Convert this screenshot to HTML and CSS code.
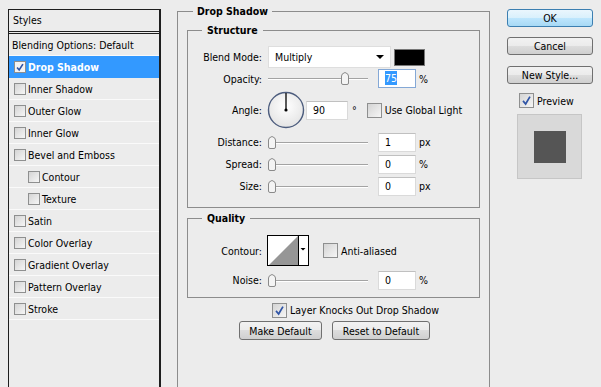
FILE: index.html
```html
<!DOCTYPE html>
<html>
<head>
  <title>Layer Style</title>
  <link rel="stylesheet" href="styles.css">
</head>
<body>

<div class="dialog">

  <div class="styles-panel">
    <div class="styles-head">Styles</div>
    <ul class="styles-list">
      <li class="plain">Blending Options: Default</li>
      <li class="selected"><span class="cb small"><svg viewBox="0 0 12 12"><path d="M2.5 6.5 L5 9.5 L9.5 2.5" /></svg></span>Drop Shadow</li>
      <li><span class="cb small"></span>Inner Shadow</li>
      <li><span class="cb small"></span>Outer Glow</li>
      <li><span class="cb small"></span>Inner Glow</li>
      <li><span class="cb small"></span>Bevel and Emboss</li>
      <li class="sub"><span class="cb small"></span>Contour</li>
      <li class="sub"><span class="cb small"></span>Texture</li>
      <li><span class="cb small"></span>Satin</li>
      <li><span class="cb small"></span>Color Overlay</li>
      <li><span class="cb small"></span>Gradient Overlay</li>
      <li><span class="cb small"></span>Pattern Overlay</li>
      <li><span class="cb small"></span>Stroke</li>
    </ul>
  </div>

  <fieldset class="main">
    <legend>Drop Shadow</legend>

    <fieldset class="group structure">
      <legend>Structure</legend>

      <div class="row blend-row">
        <span class="lbl">Blend Mode:</span>
        <div class="select">Multiply<span class="arrow"></span></div>
        <span class="swatch"></span>
      </div>

      <div class="row opacity-row">
        <span class="lbl">Opacity:</span>
        <div class="slider"><svg class="thumb" style="margin-left: 73px" viewBox="0 0 8 13"><path d="M0.5 11 V4 Q0.5 1.5 4 0.5 Q7.5 1.5 7.5 4 V11 Q7.5 12.5 6 12.5 H2 Q0.5 12.5 0.5 11 Z" /></svg></div>
        <div class="field focus"><span class="sel">75</span></div>
        <span class="unit">%</span>
      </div>

      <div class="row angle-row">
        <span class="lbl">Angle:</span>
        <svg class="dial" viewBox="0 0 38 38">
          <defs>
            <radialGradient id="dialFill" cx="50%" cy="40%" r="60%">
              <stop offset="0" stop-color="#ffffff"/>
              <stop offset="1" stop-color="#e4e4e4"/>
            </radialGradient>
          </defs>
          <circle cx="19" cy="19" r="17.5" fill="url(#dialFill)" stroke="#4d5d7e" stroke-width="1.4"/>
          <line x1="19" y1="19" x2="19" y2="2" stroke="#000" stroke-width="1.3"/>
          <circle cx="19" cy="19" r="1.6" fill="#000"/>
        </svg>
        <div class="field angle-field">90</div>
        <span class="deg">°</span>
        <span class="cb global"></span>
        <span class="cb-text">Use Global Light</span>
      </div>

      <div class="row">
        <span class="lbl">Distance:</span>
        <div class="slider"><svg class="thumb" style="margin-left: 0px" viewBox="0 0 8 13"><path d="M0.5 11 V4 Q0.5 1.5 4 0.5 Q7.5 1.5 7.5 4 V11 Q7.5 12.5 6 12.5 H2 Q0.5 12.5 0.5 11 Z" /></svg></div>
        <div class="field">1</div>
        <span class="unit">px</span>
      </div>

      <div class="row">
        <span class="lbl">Spread:</span>
        <div class="slider"><svg class="thumb" style="margin-left: 0px" viewBox="0 0 8 13"><path d="M0.5 11 V4 Q0.5 1.5 4 0.5 Q7.5 1.5 7.5 4 V11 Q7.5 12.5 6 12.5 H2 Q0.5 12.5 0.5 11 Z" /></svg></div>
        <div class="field">0</div>
        <span class="unit">%</span>
      </div>

      <div class="row">
        <span class="lbl">Size:</span>
        <div class="slider"><svg class="thumb" style="margin-left: 0px" viewBox="0 0 8 13"><path d="M0.5 11 V4 Q0.5 1.5 4 0.5 Q7.5 1.5 7.5 4 V11 Q7.5 12.5 6 12.5 H2 Q0.5 12.5 0.5 11 Z" /></svg></div>
        <div class="field">0</div>
        <span class="unit">px</span>
      </div>
    </fieldset>

    <fieldset class="group quality">
      <legend>Quality</legend>

      <div class="row contour-row">
        <span class="lbl">Contour:</span>
        <svg class="contour" viewBox="0 0 42 31">
          <rect x="0.5" y="0.5" width="41" height="30" fill="#fff" stroke="#000"/>
          <polygon points="2,30 31,1 31,30" fill="#969696"/>
          <line x1="31.5" y1="0" x2="31.5" y2="31" stroke="#000"/>
          <polygon points="33.5,13 38.5,13 36,15.5" fill="#000"/>
        </svg>
        <span class="cb anti"></span>
        <span class="cb-text">Anti-aliased</span>
      </div>

      <div class="row noise-row">
        <span class="lbl">Noise:</span>
        <div class="slider"><svg class="thumb" style="margin-left: 0px" viewBox="0 0 8 13"><path d="M0.5 11 V4 Q0.5 1.5 4 0.5 Q7.5 1.5 7.5 4 V11 Q7.5 12.5 6 12.5 H2 Q0.5 12.5 0.5 11 Z" /></svg></div>
        <div class="field">0</div>
        <span class="unit">%</span>
      </div>
    </fieldset>

    <div class="knock">
      <span class="cb"><svg viewBox="0 0 15 15"><path d="M3.5 8 L6.5 11.5 L11.5 3" /></svg></span>
      <span class="cb-text">Layer Knocks Out Drop Shadow</span>
    </div>

    <div class="defaults">
      <button class="btn make">Make Default</button>
      <button class="btn reset">Reset to Default</button>
    </div>
  </fieldset>

  <div class="side">
    <button class="btn ok">OK</button>
    <button class="btn cancel">Cancel</button>
    <button class="btn new-style">New Style...</button>
    <div class="preview-row">
      <span class="cb"><svg viewBox="0 0 15 15"><path d="M3.5 8 L6.5 11.5 L11.5 3" /></svg></span>
      <span class="cb-text">Preview</span>
    </div>
    <div class="preview">
      <div class="preview-square"></div>
    </div>
  </div>

</div>

</body>
</html>
```

FILE: styles.css
```css
body {
  margin: 0;
  background-color: #ececec;
  color: #000;
  font-family: "DejaVu Sans Condensed", "Liberation Sans", sans-serif;
  font-size: 10.5px;
}

.dialog {
  display: flex;
  align-items: flex-start;
  height: 387px;
  overflow: hidden;
}

/* left list */

.styles-panel {
  flex: none;
  margin: 9px 0 0 8px;
  width: 150px;
  height: 400px;
  border: 1px solid #1e1e1e;
  border-right-width: 2px;
}

.styles-head {
  height: 21px;
  line-height: 21px;
  padding-left: 4px;
  border-bottom: 3px double #1e1e1e;
}

.styles-list {
  list-style: none;
  margin: 0;
  padding: 0;
}

.styles-list li {
  display: flex;
  align-items: center;
  height: 21px;
  padding-left: 5px;
  border-bottom: 1px solid #fafafa;
  white-space: nowrap;
}

.styles-list li.plain {
  padding-left: 3px;
}

.styles-list li.sub {
  padding-left: 19px;
}

.styles-list li.selected {
  background-color: #3399ff;
  border-bottom-color: #3399ff;
  color: #fff;
  font-weight: bold;
}

/* checkboxes */

.cb {
  flex: none;
  display: inline-block;
  box-sizing: border-box;
  width: 15px;
  height: 15px;
  border: 1px solid #8e8f8f;
  background: linear-gradient(135deg, #d4d4d4, #f6f6f6);
}

.cb.small {
  width: 12px;
  height: 12px;
  margin-right: 2px;
}

.cb svg {
  display: block;
  width: 100%;
  height: 100%;
}

.cb path {
  fill: none;
  stroke: #2f54a6;
  stroke-width: 2;
}

.selected .cb {
  background: #f4f4f4;
}

.cb-text {
  margin-left: 3px;
  white-space: nowrap;
}

/* group boxes */

fieldset {
  min-width: 0;
  margin: 0;
  border: 1px solid #8c8c8c;
}

legend {
  font-weight: bold;
  line-height: 14px;
}

.main {
  flex: none;
  margin: 4px 0 0 16px;
  width: 293px;
  height: 400px;
  padding: 0 9px;
}

.main > legend {
  margin-left: 6px;
  padding: 0 4px;
}

.group {
  padding: 0 0 10px;
}

.group > legend {
  margin-left: 14px;
  padding: 0 5px;
}

.structure {
  margin-top: 5px;
}

.quality {
  margin-top: 3px;
  padding-bottom: 7px;
}

/* rows */

.row {
  display: flex;
  align-items: center;
  height: 22px;
  white-space: nowrap;
}

.lbl {
  flex: none;
  width: 74px;
  margin-right: 6px;
  text-align: right;
}

.blend-row {
  margin-top: 9px;
}

.opacity-row {
  height: 21px;
}

.angle-row {
  height: 42px;
}

.contour-row {
  margin-top: 10px;
  height: 31px;
}

.noise-row {
  margin-top: 4px;
  height: 20px;
}

.select {
  display: flex;
  align-items: center;
  justify-content: space-between;
  box-sizing: border-box;
  width: 123px;
  height: 22px;
  padding-left: 6px;
  background: #fff;
  border: 1px solid #dedede;
}

.arrow {
  margin-right: 6px;
  border-left: 4px solid transparent;
  border-right: 4px solid transparent;
  border-top: 4px solid #000;
}

.swatch {
  box-sizing: border-box;
  width: 31px;
  height: 17px;
  margin-left: 3px;
  background: #000;
  border: 1px solid #777;
}

.slider {
  display: flex;
  align-items: center;
  width: 100px;
  height: 13px;
  background: linear-gradient(to bottom, transparent 6px, #a3a3a3 6px, #a3a3a3 7px, #fff 7px, #fff 8px, transparent 8px);
}

.thumb {
  display: block;
  width: 8px;
  height: 13px;
}

.thumb path {
  fill: #f4f4f4;
  stroke: #8a8a8a;
}

.field {
  flex: none;
  box-sizing: border-box;
  width: 38px;
  height: 19px;
  margin-left: 10px;
  padding-left: 6px;
  line-height: 17px;
  background: #fff;
  border: 1px solid #dadada;
  border-top-color: #c0c0c0;
}

.field.focus {
  border-color: #84a8d6;
}

.sel {
  background: #3399ff;
  color: #fff;
  padding: 1px 0;
}

.unit {
  margin-left: 3px;
}

.dial {
  flex: none;
  width: 38px;
  height: 38px;
  margin-left: -1px;
}

.angle-field {
  width: 42px;
  margin-left: 1px;
}

.deg {
  margin-left: 4px;
}

.cb.global {
  margin-left: 10px;
}

.contour {
  flex: none;
  width: 42px;
  height: 31px;
  margin-left: -1px;
}

.cb.anti {
  margin-left: 14px;
}

.knock {
  display: flex;
  align-items: center;
  height: 16px;
  margin-top: 4px;
  padding-left: 85px;
}

.defaults {
  display: flex;
  gap: 10px;
  margin-top: 3px;
  padding-left: 52px;
}

/* buttons */

.btn {
  box-sizing: border-box;
  height: 19px;
  padding: 0;
  font-family: inherit;
  font-size: inherit;
  color: #000;
  border: 1px solid #707070;
  border-radius: 3px;
  background: linear-gradient(to bottom, #f2f2f2, #ebebeb 50%, #dddddd 50%, #cfcfcf);
}

.btn.make {
  width: 83px;
}

.btn.reset {
  width: 98px;
}

.side {
  flex: none;
  display: flex;
  flex-direction: column;
  width: 86px;
  margin: 9px 0 0 17px;
}

.side .btn {
  height: 18px;
}

.btn.ok {
  border-color: #3c7fb1;
  background: linear-gradient(to bottom, #eaf6fd, #d9f0fc 50%, #bee6fd 50%, #a7d9f5);
}

.btn.cancel {
  margin-top: 10px;
}

.btn.new-style {
  margin-top: 11px;
}

.preview-row {
  display: flex;
  align-items: center;
  height: 15px;
  margin-top: 9px;
  padding-left: 12px;
}

.preview {
  display: flex;
  align-items: center;
  justify-content: center;
  box-sizing: border-box;
  width: 65px;
  height: 65px;
  margin: 6px 0 0 10px;
  background: #d9d9d9;
  border: 1px solid #c6c6c6;
}

.preview-square {
  width: 32px;
  height: 32px;
  background: #555;
}
```
